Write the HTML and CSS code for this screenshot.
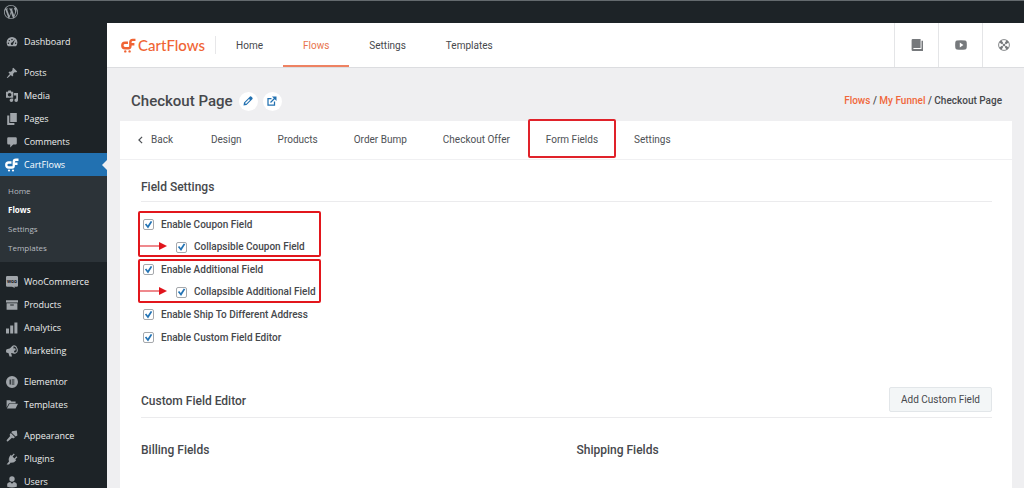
FILE: index.html
```html
<!DOCTYPE html>
<html lang="en">
<head>
<meta charset="utf-8">
<meta name="viewport" content="width=device-width, initial-scale=1">
<title>Checkout Page – CartFlows</title>
<link rel="stylesheet" href="styles.css">
</head>
<body class="app">
<svg class="defs" aria-hidden="true">
  <symbol id="cart" viewBox="0 0 28 28">
    <path d="M13 9H7.500a5 5 0 0 0 0 10H14q3.500 0 3.500-3.500V8q0-4.500 4.500-4.500h5M17 11.500h8" fill="none" stroke="currentColor" stroke-width="4.600"/>
    <circle cx="8" cy="25" r="2.200"/><circle cx="16" cy="25" r="2.200"/>
  </symbol>
</svg>
<header class="topbar">
  <a href="#" class="wp" aria-label="WordPress">
    <svg viewBox="0 0 20 20"><path d="M20 10c0-5.51-4.49-10-10-10C4.48 0 0 4.490 0 10c0 5.520 4.480 10 10 10 5.510 0 10-4.480 10-10zM7.780 15.370L4.370 6.220c.55-.02 1.170-.08 1.170-.08.5-.06.44-1.130-.06-1.110 0 0-1.450.11-2.370.11-.18 0-.37 0-.58-.01C4.120 2.690 6.870 1.110 10 1.110c2.330 0 4.450.87 6.050 2.340-.68-.11-1.650.39-1.650 1.580 0 .74.45 1.360.9 2.100.35.61.55 1.360.55 2.460 0 1.490-1.400 5-1.400 5l-3.030-8.370c.54-.02.82-.17.82-.17.5-.05.44-1.250-.06-1.220 0 0-1.440.12-2.380.12-.87 0-2.330-.12-2.330-.12-.5-.03-.56 1.200-.06 1.220l.92.08 1.260 3.410zM17.410 10c.24-.64.74-1.870.43-4.250.7 1.290 1.050 2.710 1.050 4.250 0 3.290-1.730 6.240-4.400 7.780.97-2.590 1.940-5.200 2.920-7.780zM6.100 18.090C3.120 16.650 1.110 13.530 1.110 10c0-1.300.23-2.480.72-3.590C3.250 10.300 4.670 14.200 6.100 18.090zm4.030-6.630l2.580 6.980c-.86.29-1.760.45-2.710.45-.79 0-1.570-.11-2.290-.33.81-2.380 1.620-4.740 2.420-7.100z"/></svg>
  </a>
</header>
<div class="shell">
  <nav class="sidebar" aria-label="Admin menu">
    <div class="group">
      <a href="#" class="item"><svg viewBox="0 0 20 20"><path fill-rule="evenodd" d="M3.500 17a9 9 0 1 1 13 0zM10 4.500a1.300 1.300 0 1 0 0 2.600 1.300 1.300 0 0 0 0-2.600zM5.500 6.500a1.200 1.200 0 1 0 0 2.400 1.200 1.200 0 0 0 0-2.400zM4 11a1.200 1.200 0 1 0 0 2.400A1.200 1.200 0 0 0 4 11zm12 0a1.200 1.200 0 1 0 0 2.400 1.200 1.200 0 0 0 0-2.400zm-1-5-5 5a2 2 0 1 0 2 2z"/></svg>Dashboard</a>
    </div>
    <div class="group">
      <a href="#" class="item"><svg viewBox="0 0 20 20"><path d="M10.440 3.020l1.820-1.820 6.360 6.350-1.830 1.820c-1.050-.68-2.480-.57-3.410.36l-.75.75c-.92.93-1.040 2.350-.35 3.410l-1.830 1.820-2.410-2.410-2.800 2.790c-.42.42-3.380 2.710-3.800 2.290s1.860-3.390 2.280-3.810l2.790-2.790L4.100 9.360l1.830-1.820c1.050.69 2.480.57 3.400-.36l.75-.75c.93-.92 1.050-2.350.36-3.410z"/></svg>Posts</a>
      <a href="#" class="item"><svg viewBox="0 0 20 20"><path fill-rule="evenodd" d="M0 3h3l1-2h4l1 2h3v10H0zM6 5a3 3 0 1 0 0 6 3 3 0 0 0 0-6zM13 5h7v12a3 3 0 1 1-3-3V9h-4zM12 14v3a3 3 0 1 1-3-3z"/></svg>Media</a>
      <a href="#" class="item"><svg viewBox="0 0 20 20"><path d="M7 0h11v15H7zM2 4h3.500v12.500H14V20H2z"/></svg>Pages</a>
      <a href="#" class="item"><svg viewBox="0 0 20 20"><path d="M4 2h12q2 0 2 2v8q0 2-2 2h-4l-5 5v-5H4q-2 0-2-2V4q0-2 2-2z"/></svg>Comments</a>
      <a href="#" class="item current"><svg class="cart" viewBox="0 0 28 28"><use href="#cart"/></svg>CartFlows</a>
      <div class="submenu">
        <a href="#">Home</a>
        <a href="#" class="active">Flows</a>
        <a href="#">Settings</a>
        <a href="#">Templates</a>
      </div>
    </div>
    <div class="group">
      <a href="#" class="item"><svg viewBox="0 0 20 20"><path d="M2 0h16q2 0 2 2v14q0 2-2 2h-4l1 2-5-2H2q-2 0-2-2V2q0-2 2-2z"/><text class="woo" x="10" y="12" text-anchor="middle">woo</text></svg>WooCommerce</a>
      <a href="#" class="item"><svg viewBox="0 0 20 20"><path fill-rule="evenodd" d="M0 2h20v4H0zM1 7h18v11H1zm6 2v2h6V9z"/></svg>Products</a>
      <a href="#" class="item"><svg viewBox="0 0 20 20"><path d="M0 11h5v8H0zM7 6h5v13H7zM14 1h5v18h-5z"/></svg>Analytics</a>
      <a href="#" class="item"><svg viewBox="0 0 20 20"><path d="M12 1 6 6 1 7q-2 3 0 6l3 .5L6 19h4l-1.500-5.500 5.500.5z"/><ellipse cx="14" cy="7.500" rx="4.500" ry="6" fill="none" stroke="currentColor" stroke-width="1.800" transform="rotate(-18 14 7.500)"/><circle cx="14" cy="7.500" r="2"/></svg>Marketing</a>
    </div>
    <div class="group">
      <a href="#" class="item"><svg viewBox="0 0 20 20"><path fill-rule="evenodd" d="M10 0a10 10 0 1 0 0 20 10 10 0 0 0 0-20zM6 6h2v8H6zm3.500 0H14v1.700H9.500zm0 3.200H14v1.700H9.500zm0 3.100H14V14H9.500z"/></svg>Elementor</a>
      <a href="#" class="item"><svg viewBox="0 0 20 20"><path d="M1 14V2h6l2 2h7v3H5zM6 8h14l-4 8H1.500z"/></svg>Templates</a>
    </div>
    <div class="group">
      <a href="#" class="item"><svg viewBox="0 0 20 20"><path d="m10 2 8-1 1 8-3 2-7-7zM8 5l7 7-3 2-2-1-7 6q-2 0-2-2l6-7-1-2z"/></svg>Appearance</a>
      <a href="#" class="item"><svg viewBox="0 0 20 20"><path d="m13 1 1.500 1.500L11 6l3 3 3.500-3.500L19 7l-3.500 3.500L17 12q-4 5-9 4l-3 3H1l4-5Q3 9 8 3l1.500 1.500z"/></svg>Plugins</a>
      <a href="#" class="item"><svg viewBox="0 0 20 20"><circle cx="10" cy="5" r="4.500"/><path d="M2 18v-5q2-3 5-3l3 3 3-3q3 0 5 3v5q-8 2-16 0z"/></svg>Users</a>
    </div>
  </nav>
  <div class="content">
    <header class="masthead">
      <a href="#" class="brand"><svg viewBox="0 0 28 28"><use href="#cart"/></svg>CartFlows</a>
      <nav class="mainnav" aria-label="CartFlows">
        <a href="#">Home</a>
        <a href="#" class="active">Flows</a>
        <a href="#">Settings</a>
        <a href="#">Templates</a>
      </nav>
      <div class="tools">
        <a href="#" aria-label="Documentation"><svg viewBox="0 0 20 20"><path d="M3 0h13v15H4v1.500h13.500V3H20v17H3q-2 0-2-2V2q0-2 2-2z"/></svg></a>
        <a href="#" aria-label="Videos"><svg viewBox="0 0 20 20"><path fill-rule="evenodd" d="M3 2.500q7-1 14 0 2 0 2.500 3 .5 4.500 0 9-.5 3-2.500 3-7 1-14 0-2 0-2.500-3-.5-4.500 0-9 .5-3 2.500-3zM8 6v8l6-4z"/></svg></a>
        <a href="#" aria-label="Support"><svg viewBox="0 0 20 20"><circle cx="10" cy="10" r="9" fill="none" stroke="currentColor" stroke-width="1.500"/><path d="M5.500 1.800 9 7a3.500 3.500 0 0 0-2 2L1.800 5.500a10 10 0 0 1 3.700-3.700zm9 0a10 10 0 0 1 3.700 3.700L13 9a3.500 3.500 0 0 0-2-2zM1.800 14.500 7 11a3.500 3.500 0 0 0 2 2l-3.500 5.200a10 10 0 0 1-3.700-3.700zm16.400 0a10 10 0 0 1-3.700 3.700L11 13a3.500 3.500 0 0 0 2-2z"/><circle cx="10" cy="10" r="2"/></svg></a>
      </div>
    </header>
    <main class="page">
      <div class="titlebar">
        <h1>Checkout Page</h1>
        <button type="button" class="round" aria-label="Edit title"><svg viewBox="0 0 20 20"><path fill-rule="evenodd" d="M14 1q1.500-1 3 .5L18.500 3q1.500 1.500.5 3L7 18l-6 1 1-6zM4 14l2 2 8-8-2-2z"/></svg></button>
        <button type="button" class="round" aria-label="Open page"><svg viewBox="0 0 20 20"><path d="M9 5H2v13h13v-7M7 13l9-9" fill="none" stroke="currentColor" stroke-width="2.500"/><path d="M10 1h9v9z"/></svg></button>
        <nav class="crumbs" aria-label="Breadcrumb"><a href="#">Flows</a> / <a href="#">My Funnel</a> / <span>Checkout Page</span></nav>
      </div>
      <section class="card">
        <nav class="tabs" aria-label="Step">
          <a href="#" class="back"><svg viewBox="0 0 6 10"><path d="M5 1 1 5l4 4" fill="none" stroke="currentColor" stroke-width="1.500"/></svg>Back</a>
          <a href="#">Design</a>
          <a href="#">Products</a>
          <a href="#">Order Bump</a>
          <a href="#">Checkout Offer</a>
          <a href="#" class="marked">Form Fields</a>
          <a href="#">Settings</a>
        </nav>
        <div class="body">
          <div class="section-head"><h2>Field Settings</h2></div>
          <div class="options">
            <div class="pair">
              <label class="option"><input type="checkbox" checked>Enable Coupon Field</label>
              <label class="option child"><input type="checkbox" checked>Collapsible Coupon Field</label>
              <svg class="arrow" viewBox="0 0 28 8"><path d="M0 3.500h20V0l8 4-8 4V4.500H0z"/></svg>
            </div>
            <div class="pair">
              <label class="option"><input type="checkbox" checked>Enable Additional Field</label>
              <label class="option child"><input type="checkbox" checked>Collapsible Additional Field</label>
              <svg class="arrow" viewBox="0 0 28 8"><path d="M0 3.500h20V0l8 4-8 4V4.500H0z"/></svg>
            </div>
            <label class="option"><input type="checkbox" checked>Enable Ship To Different Address</label>
            <label class="option"><input type="checkbox" checked>Enable Custom Field Editor</label>
          </div>
          <div class="section-head"><h2>Custom Field Editor</h2><button type="button" class="add">Add Custom Field</button></div>
          <div class="columns">
            <h2>Billing Fields</h2>
            <h2>Shipping Fields</h2>
          </div>
        </div>
      </section>
    </main>
  </div>
</div>
</body>
</html>
```
FILE: styles.css
```css
*, *::before, *::after { box-sizing: border-box; }
html { height: 100%; }
.app {
  margin: 0;
  height: 100%;
  overflow: hidden;
  display: flex;
  flex-direction: column;
  background: #efeff1;
  color: #46484c;
  font: 10px/16px Roboto, "Liberation Sans", sans-serif;
}
a { color: inherit; text-decoration: none; }
h1, h2 { margin: 0; font-weight: 500; }
h1 { font-size: 15px; line-height: 24px; }
h2 { font-size: 12px; line-height: 16px; }
svg { display: block; fill: currentColor; }
button { font: inherit; color: inherit; padding: 0; }
.defs { position: absolute; width: 0; height: 0; }

.topbar {
  flex: none;
  height: 23px;
  padding: 0 4px;
  display: flex;
  align-items: center;
  background: #1d2327;
  border-top: 1px solid #646a6e;
  color: #9ca2a7;
}
.wp svg { width: 14px; height: 14px; }
.shell { flex: 1; display: flex; min-height: 0; }

.sidebar {
  flex: none;
  width: 107px;
  padding-top: 7px;
  display: flex;
  flex-direction: column;
  gap: 8px;
  background: #1d2327;
  color: #eceded;
  font: 9px/23px "Open Sans", "Noto Sans", sans-serif;
}
.item { position: relative; height: 23px; padding-left: 6px; display: flex; align-items: center; gap: 6px; }
.item svg { width: 12px; height: 12px; color: #a0a5aa; }
.item .cart { width: 14px; height: 14px; margin: 0 -1px; color: #fff; }
.woo { font: bold 8px "Open Sans", sans-serif; fill: #1d2327; }
.current { background: #2271b1; color: #fff; }
.current::after {
  content: "";
  position: absolute;
  right: 0;
  top: 7px;
  border: 5px solid transparent;
  border-left: 0;
  border-right-color: #efeff1;
}
.submenu {
  padding: 5px 8px;
  display: flex;
  flex-direction: column;
  background: #2c3338;
  color: #b8bcc0;
  font-size: 8px;
  line-height: 19px;
}
.submenu .active { color: #fff; font-weight: 700; }

.content { flex: 1; min-width: 0; display: flex; flex-direction: column; }
.masthead {
  flex: none;
  height: 45px;
  padding-left: 14px;
  display: flex;
  align-items: stretch;
  background: #fff;
  border-bottom: 1px solid #dcdde0;
}
.brand {
  display: flex;
  align-items: center;
  align-self: center;
  gap: 2px;
  height: 18px;
  padding-right: 10px;
  border-right: 1px solid #e7e7e9;
  color: #f06434;
  font: 500 15px/18px Lato, sans-serif;
}
.brand svg { width: 15px; height: 15px; }
.mainnav { display: flex; line-height: 46px; }
.mainnav a { padding: 0 20px; }
.mainnav .active { color: #e8744c; border-bottom: 2px solid #ee8262; }
.tools { margin-left: auto; display: flex; color: #76797c; }
.tools a { width: 44px; border-left: 1px solid #e4e5e7; display: grid; place-items: center; }
.tools a:last-child { width: 42px; }
.tools svg { width: 12px; height: 12px; }

.page { flex: 1; padding: 21px 12px 0 13px; display: flex; flex-direction: column; min-height: 0; }
.titlebar { display: flex; align-items: center; gap: 5px; padding: 0 10px 8px 11px; }
.titlebar h1 { margin-right: 1px; }
.round {
  width: 19px;
  height: 19px;
  border: 0;
  border-radius: 50%;
  background: #fff;
  color: #2271b1;
  display: grid;
  place-items: center;
}
.round svg { width: 10px; height: 10px; }
.crumbs { margin-left: auto; font-weight: 500; }
.crumbs a { color: #f0683c; }

.card { flex: 1; background: #fff; }
.tabs {
  display: flex;
  gap: 36px;
  padding: 11px 18px;
  border-bottom: 1px solid #f0f0f2;
  color: #4e5155;
}
.back { display: flex; align-items: center; gap: 8px; margin-right: 2px; }
.back svg { width: 5px; height: 8px; }
.marked { position: relative; }
.marked::after {
  content: "";
  position: absolute;
  inset: -13px -18px -10px;
  border: 2px solid #e0222a;
  border-radius: 2px;
}
.body { padding: 15px 20px 0 21px; }
.section-head {
  display: flex;
  align-items: center;
  justify-content: space-between;
  min-height: 27px;
  padding-bottom: 5px;
  border-bottom: 1px solid #ebebed;
}
.section-head h2 { padding-top: 2px; }
.options { padding: 11px 2px 38px; display: flex; flex-direction: column; font-weight: 500; }
.pair { position: relative; display: flex; flex-direction: column; }
.pair::after {
  content: "";
  position: absolute;
  left: -5px;
  top: -2px;
  width: 183px;
  height: 46px;
  border: 2px solid #e2161c;
  border-radius: 2px;
  pointer-events: none;
}
.pair + .pair::after { top: 1px; height: 44px; }
.option { display: flex; align-items: center; gap: 7px; height: 23px; }
.child { height: 22px; padding-left: 33px; }
.option input {
  appearance: none;
  flex: none;
  width: 11px;
  height: 11px;
  margin: 0;
  border: 1px solid #a5a8ac;
  border-radius: 2px;
  background: #fff;
}
.option input:checked::before {
  content: "";
  display: block;
  height: 9px;
  background: #2474b5;
  clip-path: polygon(10% 50%, 25% 40%, 42% 62%, 75% 10%, 92% 20%, 45% 95%);
}
.arrow { position: absolute; left: -4px; top: 29px; width: 28px; height: 8px; color: #e0141c; }
.add {
  height: 25px;
  padding: 0 11px;
  border: 1px solid #e2e6e9;
  border-radius: 2px;
  background: #f3f6f7;
}
.columns { display: grid; grid-template-columns: 1fr 1fr; gap: 20px; padding-top: 24px; }
```
